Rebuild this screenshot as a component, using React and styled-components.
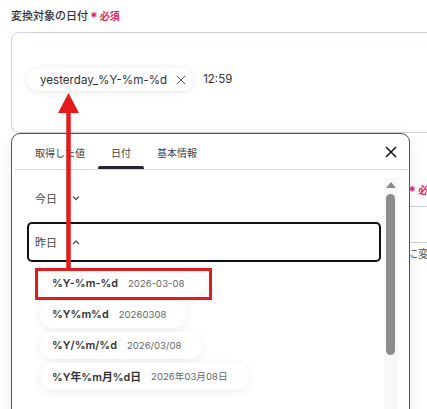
import React, { useState } from "react";
import styled, { createGlobalStyle } from "styled-components";

const GlobalStyle = createGlobalStyle`
  html, body {
    margin: 0;
    padding: 0;
    background: #ffffff;
    overflow: hidden;
  }
  body {
    font-family: "Inter", "Noto Sans CJK JP", sans-serif;
    color: #333;
  }
`;

const formats = [
  { key: "%Y-%m-%d", sample: "2026-03-08" },
  { key: "%Y%m%d", sample: "20260308" },
  { key: "%Y/%m/%d", sample: "2026/03/08" },
  { key: "%Y年%m月%d日", sample: "2026年03月08日" },
];

const tabs = ["取得した値", "日付", "基本情報"];

const Chevron = ({ up }) => (
  <svg width="8" height="6" viewBox="0 0 8 6">
    <polyline
      points={up ? "1,5 4,2 7,5" : "1,1.5 4,4.5 7,1.5"}
      fill="none"
      stroke="#555"
      strokeWidth="1.3"
    />
  </svg>
);

const CloseIcon = ({ size = 12, color = "#111", width = 1.5 }) => (
  <svg width={size} height={size} viewBox="0 0 12 12">
    <path d="M1 1 L11 11 M11 1 L1 11" stroke={color} strokeWidth={width} />
  </svg>
);

const App = () => {
  const [activeTab, setActiveTab] = useState(1);

  return (
    <Page>
      <GlobalStyle />
      <Field>
        <Label>
          変換対象の日付
          <Required>
            <Star>*</Star>必須
          </Required>
        </Label>
        <InputBox>
          <Token>
            yesterday_%Y-%m-%d
            <CloseIcon size={10} color="#555" width={1.2} />
          </Token>
          <Plain>12:59</Plain>
        </InputBox>
      </Field>

      <Field second>
        <Label>
          変換後の日付フォーマット（形式を候補から選択するか直接入力してください）
          <Required>
            <Star>*</Star>必須
          </Required>
        </Label>
        <InputBox small />
        <Helper>
          変換対象の日付の値を、上で選択または直接入力した日付フォーマットの文字列に変換します。
        </Helper>
      </Field>

      <Popup>
        <PopupHeader>
          <Tabs>
            {tabs.map((t, i) => (
              <Tab key={t} active={i === activeTab} onClick={() => setActiveTab(i)}>
                {t}
              </Tab>
            ))}
          </Tabs>
          <CloseButton>
            <CloseIcon />
          </CloseButton>
        </PopupHeader>
        <PopupBody>
          <List>
            <Row>
              今日
              <Chevron />
            </Row>
            <Row selected>
              昨日
              <Chevron up />
            </Row>
            <Options>
              {formats.map((f) => (
                <Option key={f.key}>
                  <OptionKey>{f.key}</OptionKey>
                  <OptionSample>{f.sample}</OptionSample>
                </Option>
              ))}
            </Options>
          </List>
          <ScrollTrack>
            <ScrollArrow />
            <ScrollThumb />
          </ScrollTrack>
        </PopupBody>
      </Popup>

      <Annotation width="427" height="409" viewBox="0 0 427 409">
        <rect x="36.5" y="269.5" width="174" height="29" fill="none" stroke="#e31b1d" strokeWidth="3" />
        <line x1="68.5" y1="268" x2="68.5" y2="110" stroke="#e31b1d" strokeWidth="4.5" />
        <polygon points="58,113 68.5,93 79,113" fill="#e31b1d" />
      </Annotation>
    </Page>
  );
};

const Page = styled.div`
  position: relative;
  width: 470px;
  height: 409px;
  padding: 8px 0 0 11px;
  box-sizing: border-box;
  overflow: hidden;
`;

const Field = styled.div`
  display: flex;
  flex-direction: column;
  margin-top: ${(p) => (p.second ? "49px" : "0")};
`;

const Label = styled.div`
  display: flex;
  align-items: center;
  white-space: nowrap;
  font-size: 11px;
  line-height: 16px;
  font-weight: 500;
  color: #333;
  margin-bottom: 8px;
`;

const Required = styled.span`
  display: inline-flex;
  align-items: center;
  margin-left: 2px;
  color: #e8245c;
  font-size: 10px;
  font-weight: 700;
`;

const Star = styled.span`
  font-size: 14px;
  margin-right: 2px;
  line-height: 10px;
  position: relative;
  top: 2px;
`;

const InputBox = styled.div`
  display: flex;
  align-items: flex-start;
  gap: 10px;
  box-sizing: border-box;
  height: ${(p) => (p.small ? "34px" : "101px")};
  padding: 35px 0 0 15px;
  border: 1px solid #cfd4dc;
  border-radius: 8px;
`;

const Token = styled.div`
  display: flex;
  align-items: center;
  gap: 9px;
  height: 23px;
  padding: 0 7px 0 13px;
  border-radius: 12px;
  background: #fff;
  box-shadow: 0 1px 6px rgba(0, 0, 0, 0.1);
  font-size: 11.6px;
  color: #333;
`;

const Plain = styled.span`
  font-size: 11.5px;
  line-height: 23px;
  color: #333;
`;

const Helper = styled.div`
  margin-top: 3px;
  font-size: 11px;
  line-height: 16px;
  color: #555;
  white-space: nowrap;
`;

const Popup = styled.div`
  position: absolute;
  left: 11px;
  top: 133px;
  width: 399px;
  height: 300px;
  box-sizing: border-box;
  background: #fff;
  border: 1.5px solid #4d5466;
  border-radius: 9px;
  box-shadow: 0 4px 16px rgba(0, 0, 0, 0.08);
  display: flex;
  flex-direction: column;
`;

const PopupHeader = styled.div`
  display: flex;
  justify-content: space-between;
  align-items: stretch;
  height: 34.5px;
  margin: 0 2.5px;
  border-bottom: 1px solid #d6d9de;
`;

const Tabs = styled.div`
  display: flex;
  padding-left: 7.5px;
`;

const Tab = styled.div`
  position: relative;
  display: flex;
  align-items: center;
  padding: 3px 13px 0;
  font-size: 10px;
  color: #444;
  cursor: pointer;
  &::after {
    content: "";
    display: ${(p) => (p.active ? "block" : "none")};
    position: absolute;
    left: 0;
    right: 0;
    bottom: 0;
    height: 3px;
    border-radius: 2px 2px 0 0;
    background: #23262d;
  }
`;

const CloseButton = styled.div`
  display: flex;
  align-items: center;
  padding: 2px 10px 0 0;
`;

const PopupBody = styled.div`
  display: flex;
  flex: 1;
  padding: 8px 11.5px 0 15px;
`;

const List = styled.div`
  flex: 1;
  display: flex;
  flex-direction: column;
  gap: 4px;
`;

const Row = styled.div`
  display: flex;
  align-items: center;
  gap: 15px;
  box-sizing: border-box;
  height: 40px;
  padding-left: ${(p) => (p.selected ? "6px" : "8px")};
  border: ${(p) => (p.selected ? "2px solid #111" : "none")};
  border-radius: 5px;
  font-size: 11px;
  color: #444;
`;

const Options = styled.div`
  display: flex;
  flex-direction: column;
  align-items: flex-start;
  gap: 4px;
  margin-top: 4px;
  padding-left: 13px;
`;

const Option = styled.div`
  display: flex;
  align-items: center;
  gap: 10px;
  height: 27px;
  padding: 0 21px 0 12px;
  border-radius: 14px;
  background: #fff;
  box-shadow: 0 2px 8px rgba(0, 0, 0, 0.08);
`;

const OptionKey = styled.span`
  font-size: 10.8px;
  font-weight: 600;
  color: #333;
`;

const OptionSample = styled.span`
  font-size: 9.6px;
  color: #666;
`;

const ScrollTrack = styled.div`
  display: flex;
  flex-direction: column;
  align-items: center;
  width: 14px;
  margin: -1px 0 0 3px;
  background: #f8f8f8;
`;

const ScrollArrow = styled.div`
  margin-top: 5px;
  width: 0;
  height: 0;
  border-left: 5px solid transparent;
  border-right: 5px solid transparent;
  border-bottom: 6px solid #8c8c8c;
`;

const ScrollThumb = styled.div`
  margin-top: 6px;
  width: 9px;
  height: 161px;
  border-radius: 5px;
  background: #8c8c8c;
`;

const Annotation = styled.svg`
  position: absolute;
  left: 0;
  top: 0;
  pointer-events: none;
`;

export default App;
